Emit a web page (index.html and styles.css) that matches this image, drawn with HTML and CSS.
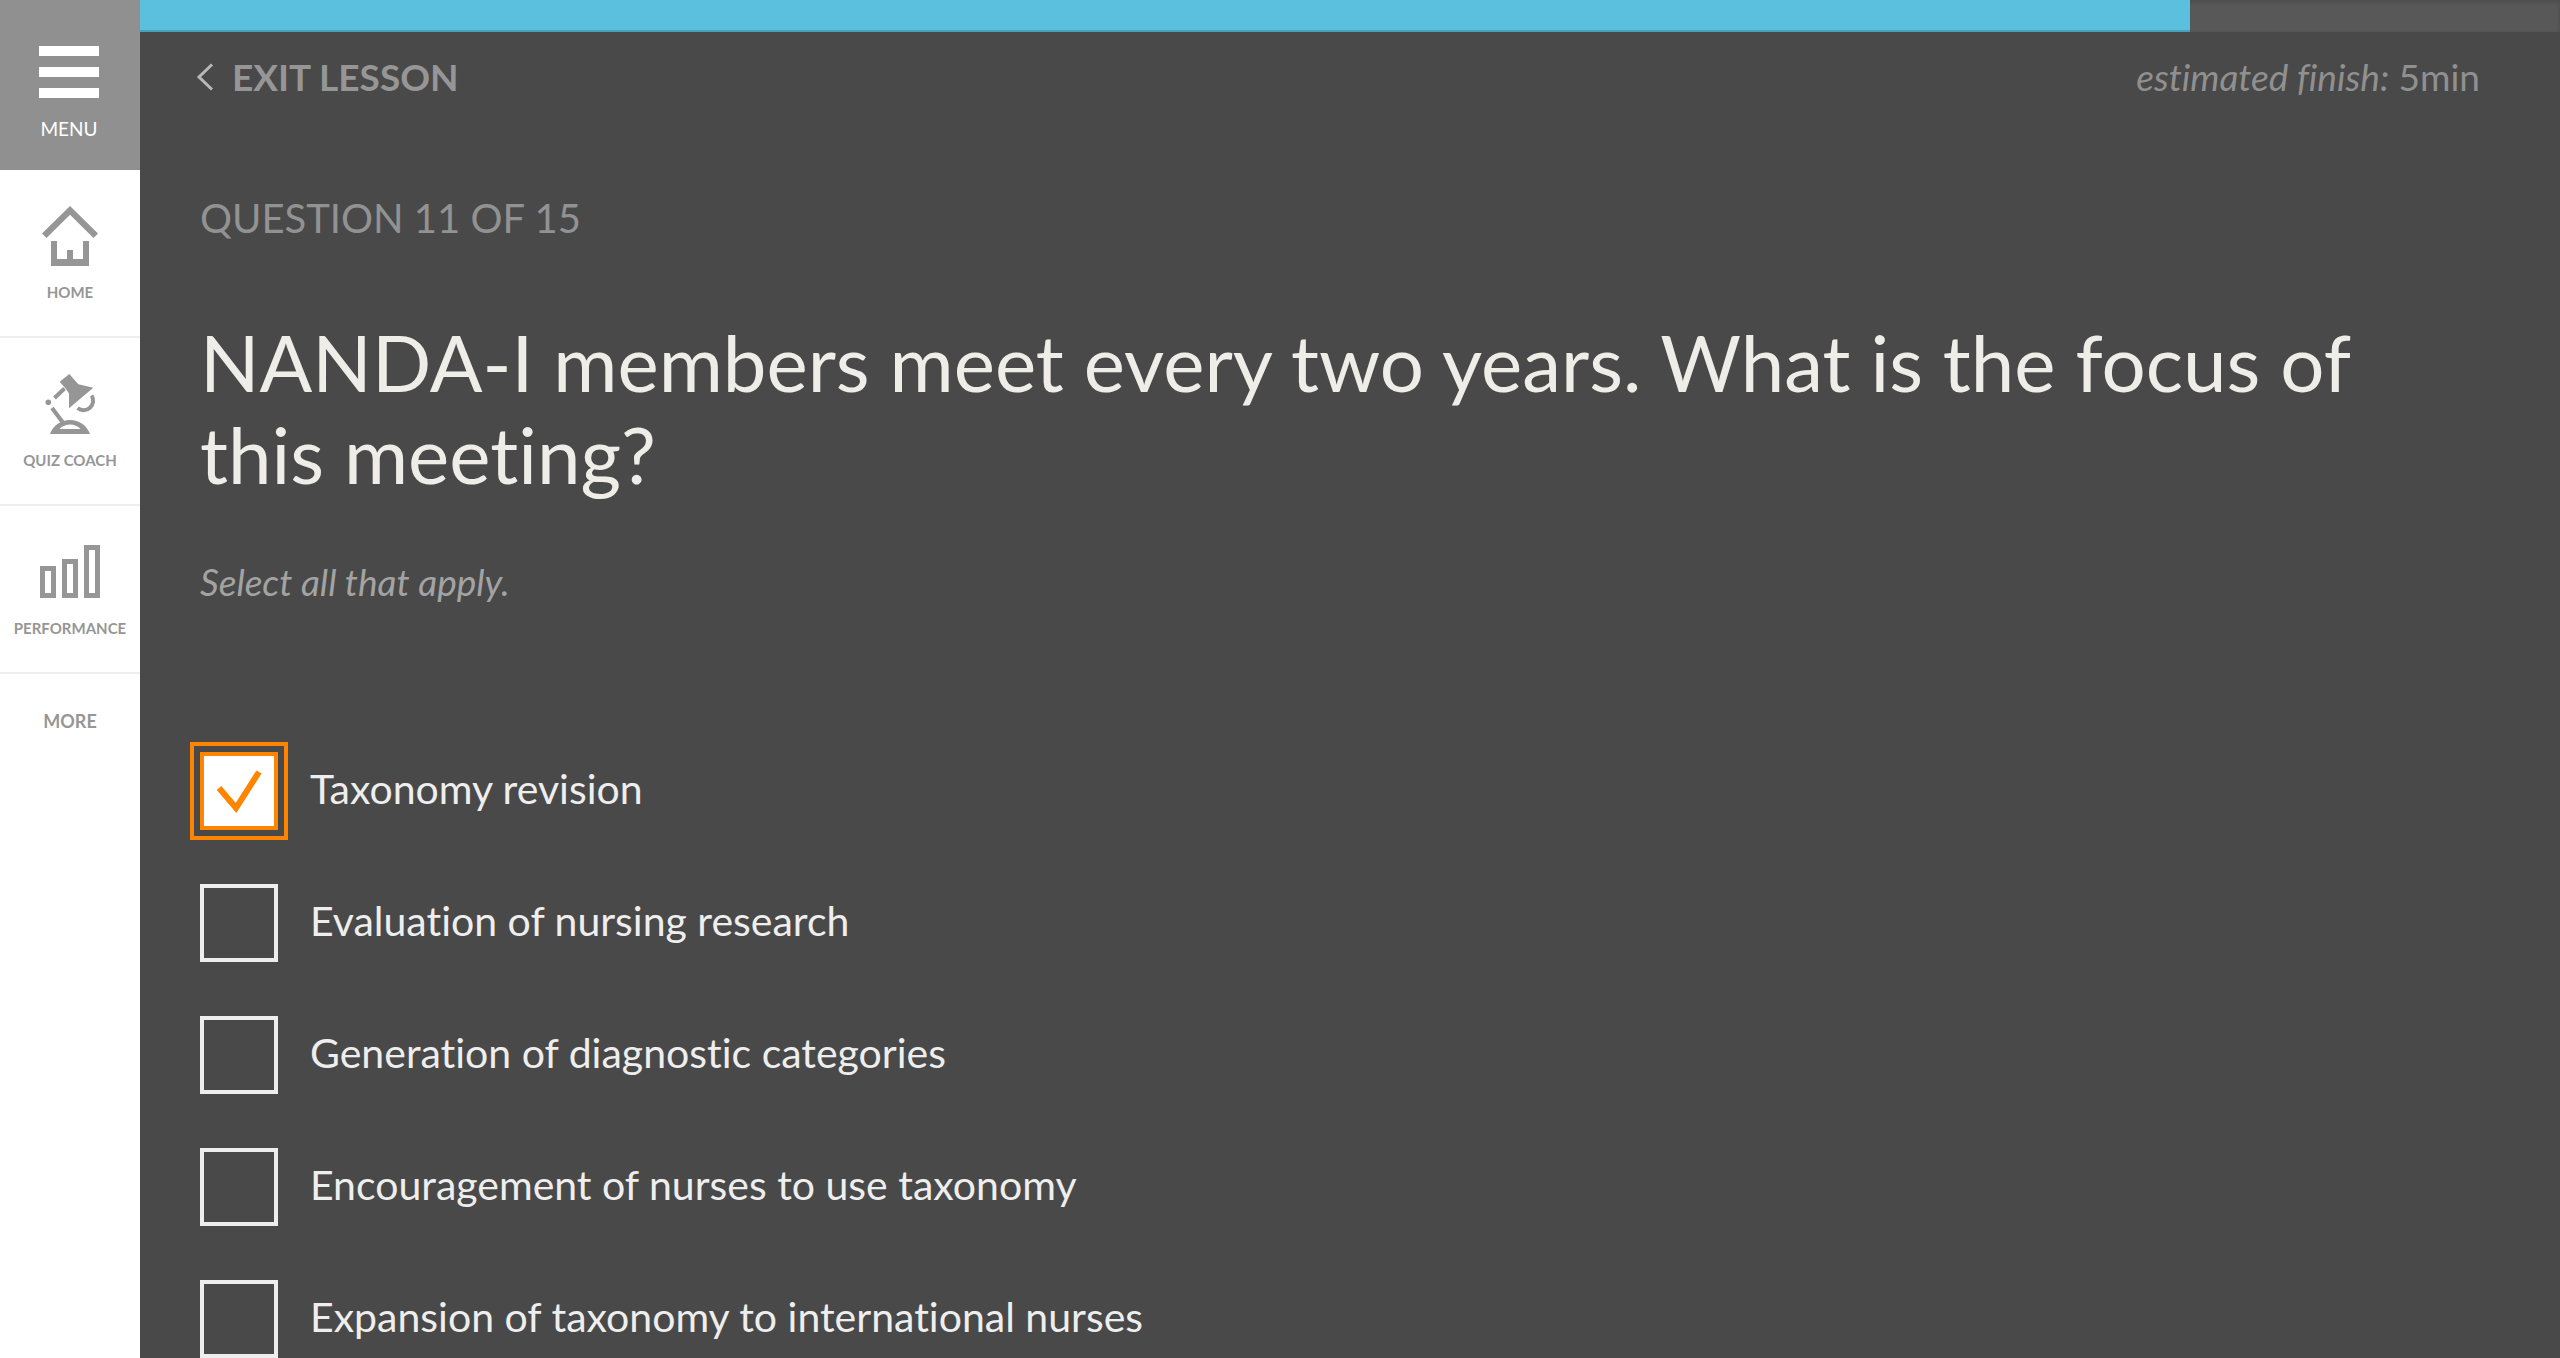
FILE: index.html
```html
<!DOCTYPE html>
<html lang="en">
<head>
<meta charset="utf-8">
<meta name="viewport" content="width=device-width, initial-scale=1">
<title>Question 11 of 15</title>
<link rel="stylesheet" href="styles.css">
</head>
<body>
<div class="app">
  <nav class="sidebar" aria-label="Main">
    <button class="menu" type="button">
      <svg width="60" height="52" viewBox="0 0 60 52" fill="currentColor" aria-hidden="true"><path d="M0 0h60v10H0zM0 21h60v10H0zM0 42h60v10H0z"/></svg>
      <span>MENU</span>
    </button>
    <a class="nav-item" href="#home">
      <svg width="60" height="60" viewBox="0 0 60 60" fill="currentColor" aria-hidden="true"><path d="M30 0l28 27.5-4.500 4.500L30 8.700 6.500 32 2 27.500zM11 35h6v18h10v-9h6v9h10V35h6v25H11z"/></svg>
      <span>HOME</span>
    </a>
    <a class="nav-item" href="#quiz-coach">
      <svg width="60" height="60" viewBox="0 0 60 60" aria-hidden="true">
        <path fill="currentColor" d="M29.300 0l9 10.300 15 3.400-24.300 20.600V19.500L26 15l-6.300-7.300z"/>
        <circle cx="8.300" cy="28.300" r="2.800" fill="currentColor"/>
        <path fill="none" stroke="currentColor" stroke-width="4" d="M14.500 24l10-9.500M12 34l10.500 14M51.600 21.500a9.500 9.500 0 0 1-14 12.500"/>
        <path fill="currentColor" fill-rule="evenodd" d="M10 60c3-8.500 11-14 20-14s17 5.500 20 14zM19.500 55h21c-2.500-3-6.500-4.500-10.500-4.500s-8 1.500-10.500 4.500z"/>
      </svg>
      <span>QUIZ COACH</span>
    </a>
    <a class="nav-item" href="#performance">
      <svg width="60" height="60" viewBox="0 0 60 60" fill="none" stroke="currentColor" stroke-width="5" aria-hidden="true"><path d="M2.500 26.500h11v27h-11zM24.500 19.500h11v34h-11zM46.500 5.500h11v48h-11z"/></svg>
      <span>PERFORMANCE</span>
    </a>
    <a class="nav-more" href="#more">MORE</a>
  </nav>

  <main class="lesson">
    <div class="progress" role="progressbar" aria-label="Lesson progress" aria-valuemin="0" aria-valuemax="100" aria-valuenow="85">
      <div class="progress-fill" style="width: 84.7%"></div>
    </div>
    <header class="lesson-bar">
      <a class="exit" href="#exit">
        <svg width="18" height="28" viewBox="0 0 18 28" fill="none" stroke="#b8b8b8" stroke-width="3" aria-hidden="true"><path d="M16 1.500L3 14l13 12.500"/></svg>
        EXIT LESSON
      </a>
      <p class="estimate"><em>estimated finish:</em> 5min</p>
    </header>
    <form class="question">
      <p class="counter">QUESTION 11 OF 15</p>
      <h1 class="prompt" id="prompt">NANDA-I members meet every two years. What is the focus of this meeting?</h1>
      <p class="hint">Select all that apply.</p>
      <div class="options" role="group" aria-labelledby="prompt">
        <div class="option">
          <span class="check"><input type="checkbox" id="o1" checked>
            <svg width="78" height="78" viewBox="0 0 78 78" fill="none" stroke="#ff8400" stroke-width="6" aria-hidden="true"><path d="M19 36l17 20 23-36"/></svg></span>
          <label for="o1">Taxonomy revision</label>
        </div>
        <div class="option">
          <span class="check"><input type="checkbox" id="o2"></span>
          <label for="o2">Evaluation of nursing research</label>
        </div>
        <div class="option">
          <span class="check"><input type="checkbox" id="o3"></span>
          <label for="o3">Generation of diagnostic categories</label>
        </div>
        <div class="option">
          <span class="check"><input type="checkbox" id="o4"></span>
          <label for="o4">Encouragement of nurses to use taxonomy</label>
        </div>
        <div class="option">
          <span class="check"><input type="checkbox" id="o5"></span>
          <label for="o5">Expansion of taxonomy to international nurses</label>
        </div>
      </div>
    </form>
  </main>
</div>
</body>
</html>
```
FILE: styles.css
```css
* {
  box-sizing: border-box;
}

body,
p,
h1 {
  margin: 0;
}

body {
  background: #494949;
  font-family: Lato, "Noto Sans", sans-serif;
  font-variant-ligatures: none;
}

a {
  color: inherit;
  text-decoration: none;
}

svg {
  display: block;
  flex: none;
}

.app {
  display: flex;
  min-height: 100vh;
}

/* Sidebar */

.sidebar {
  display: flex;
  flex: none;
  flex-direction: column;
  width: 140px;
  background: #fff;
  color: #969696;
  font-weight: 700;
}

.menu {
  display: flex;
  flex-direction: column;
  align-items: center;
  gap: 20px;
  padding: 46px 2px 30px 0;
  border: 0;
  background: #909090;
  color: #fff;
  font: 400 19px/22px Lato, "Noto Sans", sans-serif;
}

.nav-item {
  display: flex;
  flex-direction: column;
  align-items: center;
  gap: 17px;
  padding: 36px 0 35px;
  border-bottom: 2px solid #eee;
  font-size: 15px;
  line-height: 18px;
}

.nav-more {
  padding: 36px 0;
  font-size: 18px;
  line-height: 22px;
  text-align: center;
}

/* Lesson */

.lesson {
  flex: 1;
  min-width: 0;
}

.progress {
  height: 32px;
  background: #585858;
  box-shadow: inset 0 2px 4px rgba(0, 0, 0, 0.15);
}

.progress-fill {
  height: 100%;
  border-bottom: 2px solid #4a9fbb;
  background: #5bc0de;
}

.lesson-bar {
  display: flex;
  justify-content: space-between;
  padding: 23px 80px 0 56px;
  color: #969696;
  font-size: 37px;
  line-height: 44px;
}

.exit {
  display: flex;
  align-items: center;
  gap: 18px;
  font-weight: 700;
}

.estimate {
  color: #909090;
}

.question {
  padding: 95px 80px 0 60px;
}

.counter {
  color: #929292;
  font-size: 40px;
  line-height: 48px;
}

.prompt {
  margin-top: 74px;
  padding-right: 80px;
  color: #eeede7;
  font-size: 78px;
  font-weight: 400;
  line-height: 92px;
}

.hint {
  margin-top: 60px;
  color: #a3a3a3;
  font-size: 37px;
  font-style: italic;
  line-height: 44px;
}

.options {
  display: flex;
  flex-direction: column;
  gap: 54px;
  margin-top: 148px;
}

.option {
  display: flex;
  align-items: center;
  gap: 32px;
  color: #eee;
  font-size: 41px;
  line-height: 48px;
}

.option label {
  padding-bottom: 4px;
}

.check {
  display: grid;
  flex: none;
}

.check > * {
  grid-area: 1 / 1;
}

.check svg {
  z-index: 1;
  pointer-events: none;
}

.check input {
  width: 78px;
  height: 78px;
  margin: 0;
  border: 4px solid #eee;
  appearance: none;
}

.check input:checked {
  border-color: #ff8400;
  outline: 4px solid #ff8400;
  outline-offset: 6px;
  background: #fff;
}

.check input:not(:checked) + svg {
  visibility: hidden;
}
```
